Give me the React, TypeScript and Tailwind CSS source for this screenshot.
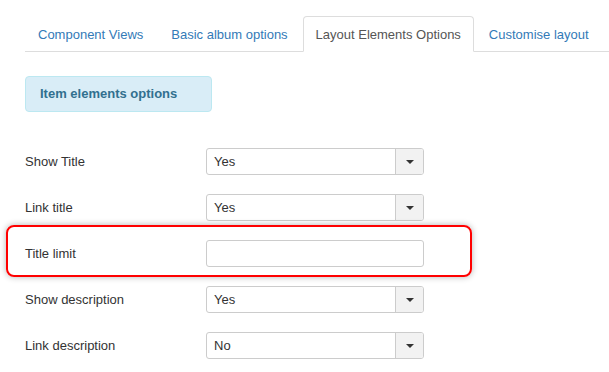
const tabs = ["Component Views", "Basic album options", "Layout Elements Options", "Customise layout"];

function SelectBox({ value }: { value: string }) {
  return (
    <div className="flex w-[218px] h-[27px] border border-[#cccccc] rounded-[3px] bg-white overflow-hidden">
      <div className="flex-1 flex items-center pl-[7px] text-[13px] text-[#333333]">{value}</div>
      <div className="w-[28px] flex items-center justify-center border-l border-[#cccccc] bg-[#f2f2f2]">
        <div className="w-0 h-0 border-l-[4px] border-r-[4px] border-t-[4px] border-l-transparent border-r-transparent border-t-[#333333]"></div>
      </div>
    </div>
  );
}

function Row({ label, children }: { label: string; children: React.ReactNode }) {
  return (
    <div className="flex items-center h-[27px]">
      <div className="w-[181px] text-[13px] text-[#333333]">{label}</div>
      {children}
    </div>
  );
}

export default function App() {
  return (
    <div className="w-[609px] h-[372px] bg-white overflow-hidden pt-[17px] pl-[25px] font-['Liberation_Sans',Arial,sans-serif]">
      <div className="flex border-b border-[#dddddd] h-[35px] items-end">
        {tabs.map((tab, i) => (
          <div
            key={tab}
            className={`mr-[2px] -mb-px px-[12px] pt-[9px] pb-[7px] leading-[18px] text-[13px] whitespace-nowrap rounded-t-[4px] border ${
              i === 2
                ? "border-[#dddddd] border-b-white bg-white text-[#555555]"
                : "border-transparent text-[#337ab7]"
            }`}
          >
            {tab}
          </div>
        ))}
      </div>
      <div className="mt-[24px] w-[187px] h-[36px] flex items-center pl-[14px] bg-[#d9edf7] border border-[#bce8f1] rounded-[4px] text-[13px] font-bold text-[#31708f]">
        Item elements options
      </div>
      <div className="mt-[36px] flex flex-col gap-[19px]">
        <Row label="Show Title">
          <SelectBox value="Yes" />
        </Row>
        <Row label="Link title">
          <SelectBox value="Yes" />
        </Row>
        <div className="relative">
          <Row label="Title limit">
            <div className="w-[218px] h-[27px] border border-[#cccccc] rounded-[3px] bg-white"></div>
          </Row>
          <div className="absolute left-[-19px] top-[-15px] w-[466px] h-[52px] border-2 border-[#ff0000] rounded-[8px] shadow-[0_0_6px_rgba(0,0,0,0.3)] pointer-events-none"></div>
        </div>
        <Row label="Show description">
          <SelectBox value="Yes" />
        </Row>
        <Row label="Link description">
          <SelectBox value="No" />
        </Row>
      </div>
    </div>
  );
}
